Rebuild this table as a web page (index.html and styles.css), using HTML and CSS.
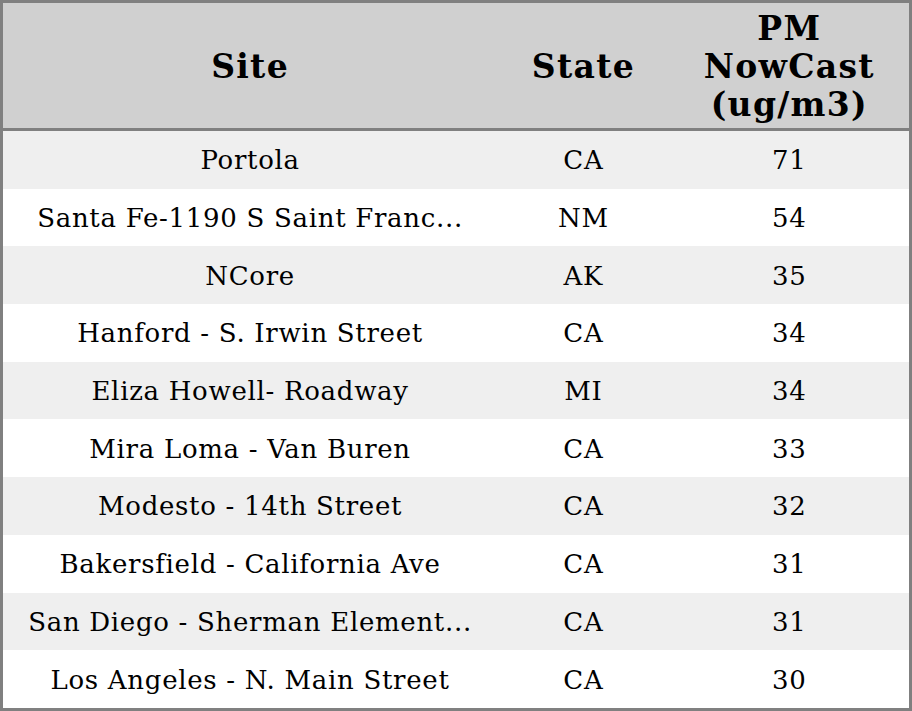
FILE: index.html
```html
<!DOCTYPE html>
<html>
<head>
<meta charset="utf-8">
<link rel="stylesheet" href="styles.css">
</head>
<body>
<table class="grid">
  <colgroup>
    <col class="c-site">
    <col class="c-state">
    <col class="c-pm">
  </colgroup>
  <thead>
    <tr>
      <th>Site</th>
      <th>State</th>
      <th>PM<br>NowCast<br>(ug/m3)</th>
    </tr>
  </thead>
  <tbody>
    <tr><td>Portola</td><td>CA</td><td>71</td></tr>
    <tr><td>Santa Fe-1190 S Saint Franc...</td><td>NM</td><td>54</td></tr>
    <tr><td>NCore</td><td>AK</td><td>35</td></tr>
    <tr><td>Hanford - S. Irwin Street</td><td>CA</td><td>34</td></tr>
    <tr><td>Eliza Howell- Roadway</td><td>MI</td><td>34</td></tr>
    <tr><td>Mira Loma - Van Buren</td><td>CA</td><td>33</td></tr>
    <tr><td>Modesto - 14th Street</td><td>CA</td><td>32</td></tr>
    <tr><td>Bakersfield - California Ave</td><td>CA</td><td>31</td></tr>
    <tr><td>San Diego - Sherman Element...</td><td>CA</td><td>31</td></tr>
    <tr><td>Los Angeles - N. Main Street</td><td>CA</td><td>30</td></tr>
  </tbody>
</table>
</body>
</html>
```
FILE: styles.css
```css
html, body {
  margin: 0;
  padding: 0;
  background: #ffffff;
}
.grid {
  width: 912px;
  height: 711px;
  border-collapse: collapse;
  table-layout: fixed;
  border: 3px solid #808080;
  font-family: "DejaVu Serif", serif;
  color: #000;
}
.c-site { width: 494px; }
.c-state { width: 172px; }
.c-pm { width: 240px; }
.grid th {
  background: #d0d0d0;
  font-size: 33px;
  font-weight: bold;
  line-height: 38px;
  letter-spacing: 1.3px;
  height: 123px;
  padding: 2px 0 0;
  text-align: center;
  vertical-align: middle;
  border-bottom: 3px solid #808080;
}
.grid td {
  font-size: 26px;
  letter-spacing: 0.7px;
  height: 56.7px;
  padding: 1px 4px 0;
  text-align: center;
  vertical-align: middle;
  white-space: nowrap;
}
.grid tbody tr:nth-child(odd) td {
  background: #efefef;
}
```
